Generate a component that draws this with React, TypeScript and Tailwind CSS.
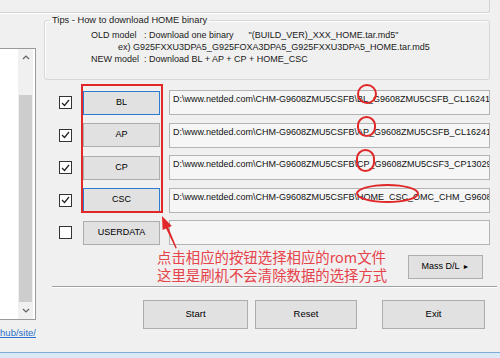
import React from "react";

type Row = {
  label: string;
  checked: boolean;
  focused: boolean;
  path: string;
};

const ROWS: Row[] = [
  {
    label: "BL",
    checked: true,
    focused: true,
    path: "D:\\www.netded.com\\CHM-G9608ZMU5CSFB\\BL_G9608ZMU5CSFB_CL16241399_QB19838512_REV00_user_low_ship.tar.md5",
  },
  {
    label: "AP",
    checked: true,
    focused: false,
    path: "D:\\www.netded.com\\CHM-G9608ZMU5CSFB\\AP_G9608ZMU5CSFB_CL16241399_QB19838512_REV00_user_low_ship.tar.md5",
  },
  {
    label: "CP",
    checked: true,
    focused: false,
    path: "D:\\www.netded.com\\CHM-G9608ZMU5CSFB\\CP_G9608ZMU5CSF3_CP13029871_CL16241399_QB19838512_REV00.tar.md5",
  },
  {
    label: "CSC",
    checked: true,
    focused: true,
    path: "D:\\www.netded.com\\CHM-G9608ZMU5CSFB\\HOME_CSC_OMC_CHM_G9608CHM5CSFB_CL16241399_QB19838512.tar.md5",
  },
  { label: "USERDATA", checked: false, focused: false, path: "" },
];

const Check = ({ on }: { on: boolean }) => (
  <div className="w-[13px] h-[13px] border border-[#333333] bg-white flex items-center justify-center">
    {on && (
      <svg width="9" height="8" viewBox="0 0 9 8">
        <polyline points="1,4 3.5,6.5 8,1" fill="none" stroke="#222" strokeWidth="1.2" />
      </svg>
    )}
  </div>
);

const Chevron = ({ up }: { up: boolean }) => (
  <svg width="8" height="5" viewBox="0 0 8 5">
    <polyline
      points={up ? "1,4 4,1 7,4" : "1,1 4,4 7,1"}
      fill="none"
      stroke="#606060"
      strokeWidth="1.2"
    />
  </svg>
);

const App = () => {
  return (
    <div className="relative w-[500px] h-[358px] overflow-hidden bg-[#f0f0f0] text-black font-['Liberation_Sans',Arial,sans-serif]">
      {/* upper group remnant */}
      <div className="h-[13px] w-[490px] border-b border-r border-[#d3d3d3] rounded-br-[3px] shadow-[0_1px_0_#ffffff]" />

      <div className="flex h-[339px]">
        {/* left list */}
        <div className="w-[36px] flex flex-col pt-[35px]">
          <div className="h-[272px] bg-white border-t border-b border-r border-[#9a9a9a] flex justify-end pr-[2px]">
            <div className="w-[15px] flex flex-col bg-[#f0f0f0]">
              <div className="h-[17px] flex items-center justify-center">
                <Chevron up />
              </div>
              <div className="h-[29px]" />
              <div className="h-[207px] mx-[1px] bg-[#cdcdcd]" />
              <div className="flex-1 flex items-center justify-center">
                <Chevron up={false} />
              </div>
            </div>
          </div>
          <div className="mt-[7px] overflow-hidden whitespace-nowrap flex justify-end text-[9.5px] leading-[12px] text-[#2a6fc9] underline">
            github/site/
          </div>
        </div>

        {/* right content */}
        <div className="w-[453px] ml-[8px] flex flex-col">
          <fieldset className="w-[446px] h-[65px] mt-[2px] border border-[#d6d6d6] rounded-[3px] shadow-[inset_1px_1px_0_#ffffff] text-[9px] leading-[12px] text-[#1a1a1a]">
            <legend className="ml-[5px] px-[2px] leading-[11px] text-[9.3px]">Tips - How to download HOME binary</legend>
            <div className="pl-[46px] pt-[3px] whitespace-pre">
              <div>{'OLD model   : Download one binary      "(BUILD_VER)_XXX_HOME.tar.md5"'}</div>
              <div className="pl-[27px]">ex) G925FXXU3DPA5_G925FOXA3DPA5_G925FXXU3DPA5_HOME.tar.md5</div>
              <div>{"NEW model  : Download BL + AP + CP + HOME_CSC"}</div>
            </div>
          </fieldset>

          <div className="mt-[10px] flex flex-col gap-[7.5px]">
            {ROWS.map((r) => (
              <div key={r.label} className="h-[25px] flex items-center">
                <div className="ml-[15px] w-[13px]">
                  <Check on={r.checked} />
                </div>
                <div
                  className={`ml-[11px] w-[77px] h-[24px] flex items-center justify-center text-[9px] bg-[#e1e1e1] border ${
                    r.focused ? "border-[#2b7bd0]" : "border-[#adadad]"
                  }`}
                >
                  {r.label}
                </div>
                <div className="ml-[9px] w-[321px] h-[25px] border border-[#b4b4b4] bg-[#f6f6f6] overflow-hidden whitespace-nowrap text-[9px] leading-[12px] pl-[3px] pt-[2px] text-[#111111]">
                  {r.path}
                </div>
              </div>
            ))}
          </div>

          <div className="mt-[3px] h-[38px] flex">
            <div className="ml-[113px] text-[14.4px] leading-[18px] text-[#e6434b] font-['Noto_Sans_CJK_SC',sans-serif] whitespace-nowrap">
              <div>点击相应的按钮选择相应的rom文件</div>
              <div>这里是刷机不会清除数据的选择方式</div>
            </div>
            <div className="ml-auto mr-[14px] mt-[7px] w-[75px] h-[24px] border border-[#adadad] bg-[#e1e1e1] flex items-center justify-center gap-[3px] text-[9px]">
              <span>Mass D/L</span>
              <span className="text-[7px]">►</span>
            </div>
          </div>

          <div className="ml-[8px] h-[2px] border-t border-[#a0a0a0] border-b border-b-white" />

          <div className="mt-[12px] flex text-[9.5px]">
            <div className="ml-[99px] w-[105px] h-[29px] border border-[#adadad] bg-[#e1e1e1] flex items-center justify-center">
              Start
            </div>
            <div className="ml-[7px] w-[102px] h-[29px] border border-[#adadad] bg-[#e1e1e1] flex items-center justify-center">
              Reset
            </div>
            <div className="ml-[25px] w-[103px] h-[29px] border border-[#adadad] bg-[#e1e1e1] flex items-center justify-center">
              Exit
            </div>
          </div>
        </div>
      </div>

      {/* window frame bottom */}
      <div className="h-[6px] border-t border-[#7fabd8] bg-[#dbe8f5]" />

      {/* red annotations */}
      <div className="absolute left-[81px] top-[84px] w-[82px] h-[129px] border-2 border-[#e02828]" />
      <div className="absolute left-[357px] top-[84px] w-[20px] h-[20px] rounded-full border-2 border-[#e02828]" />
      <div className="absolute left-[357px] top-[116px] w-[19px] h-[21px] rounded-full border-2 border-[#e02828]" />
      <div className="absolute left-[356px] top-[149px] w-[19px] h-[23px] rounded-full border-2 border-[#e02828]" />
      <div className="absolute left-[356px] top-[184px] w-[63px] h-[19px] rounded-[50%] border-2 border-[#e02828]" />
      <svg className="absolute left-[150px] top-[205px]" width="32" height="48" viewBox="0 0 32 48">
        <polygon
          points="12,11 21.8,20.9 18.3,22.4 26.8,43 25.6,43.4 16.1,23.4 12.6,24.9"
          fill="#e02828"
        />
      </svg>
    </div>
  );
};

export default App;
